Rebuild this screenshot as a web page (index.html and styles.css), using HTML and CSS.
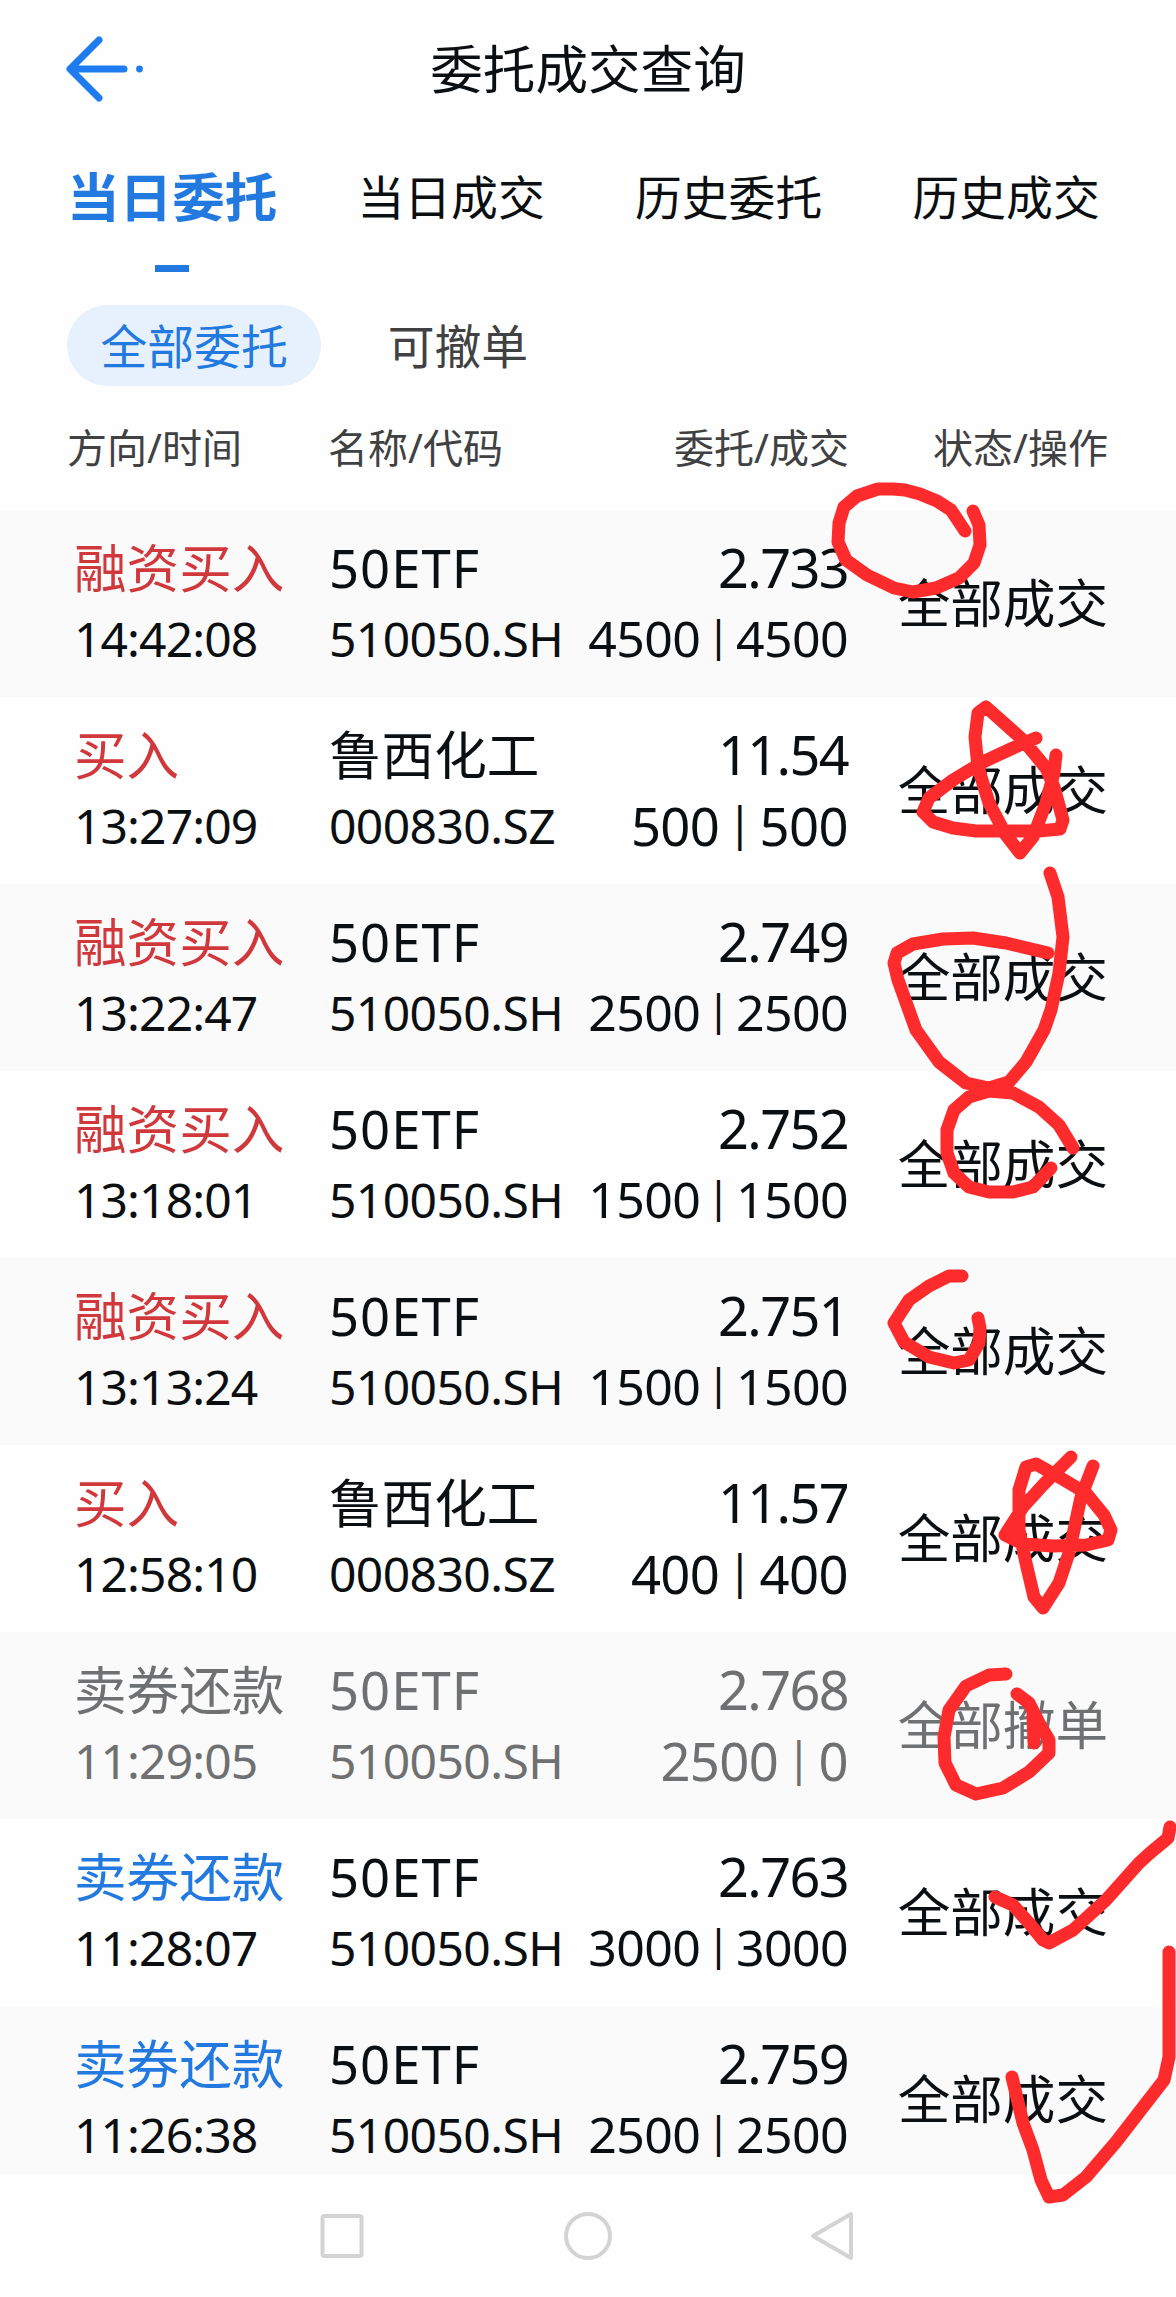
FILE: index.html
```html
<!DOCTYPE html>
<html lang="zh-CN">

<head>
    <meta charset="UTF-8">
    <meta name="viewport" content="width=device-width, initial-scale=1.0">
    <title>委托成交查询</title>

    <link rel="stylesheet" href="styles.css">
</head>

<body>
    <div class="page">
        <header class="topbar">
            <svg class="back" width="80" height="66" viewBox="0 0 80 66">
                <path d="M33 4 L4 33 L33 62 M5 33 H58" />
                <circle cx="73.500" cy="33" r="3.400" />
            </svg>
            <h1>委托成交查询</h1>
        </header>

        <nav class="tabs">
            <span class="tab active">当日委托</span>
            <span class="tab">当日成交</span>
            <span class="tab">历史委托</span>
            <span class="tab">历史成交</span>
        </nav>

        <div class="filters">
            <span class="filter on">全部委托</span>
            <span class="filter">可撤单</span>
        </div>

        <div class="thead">
            <span>方向/时间</span>
            <span>名称/代码</span>
            <span class="right">委托/成交</span>
            <span class="right">状态/操作</span>
        </div>

        <main class="list">
            <div class="row">
                <div class="side"><p class="big buy">融资买入</p><p class="time">14:42:08</p></div>
                <div class="stock"><p class="big etf">50ETF</p><p class="code">510050.SH</p></div>
                <div class="price"><p class="num">2.733</p><p class="qty long">4500 <i>|</i> 4500</p></div>
                <div class="status">全部成交</div>
            </div>
            <div class="row">
                <div class="side"><p class="big buy">买入</p><p class="time">13:27:09</p></div>
                <div class="stock"><p class="big">鲁西化工</p><p class="code">000830.SZ</p></div>
                <div class="price"><p class="num">11.54</p><p class="qty">500 <i>|</i> 500</p></div>
                <div class="status">全部成交</div>
            </div>
            <div class="row">
                <div class="side"><p class="big buy">融资买入</p><p class="time">13:22:47</p></div>
                <div class="stock"><p class="big etf">50ETF</p><p class="code">510050.SH</p></div>
                <div class="price"><p class="num">2.749</p><p class="qty long">2500 <i>|</i> 2500</p></div>
                <div class="status">全部成交</div>
            </div>
            <div class="row">
                <div class="side"><p class="big buy">融资买入</p><p class="time">13:18:01</p></div>
                <div class="stock"><p class="big etf">50ETF</p><p class="code">510050.SH</p></div>
                <div class="price"><p class="num">2.752</p><p class="qty long">1500 <i>|</i> 1500</p></div>
                <div class="status">全部成交</div>
            </div>
            <div class="row">
                <div class="side"><p class="big buy">融资买入</p><p class="time">13:13:24</p></div>
                <div class="stock"><p class="big etf">50ETF</p><p class="code">510050.SH</p></div>
                <div class="price"><p class="num">2.751</p><p class="qty long">1500 <i>|</i> 1500</p></div>
                <div class="status">全部成交</div>
            </div>
            <div class="row">
                <div class="side"><p class="big buy">买入</p><p class="time">12:58:10</p></div>
                <div class="stock"><p class="big">鲁西化工</p><p class="code">000830.SZ</p></div>
                <div class="price"><p class="num">11.57</p><p class="qty">400 <i>|</i> 400</p></div>
                <div class="status">全部成交</div>
            </div>
            <div class="row cancelled">
                <div class="side"><p class="big">卖券还款</p><p class="time">11:29:05</p></div>
                <div class="stock"><p class="big etf">50ETF</p><p class="code">510050.SH</p></div>
                <div class="price"><p class="num">2.768</p><p class="qty">2500 <i>|</i> 0</p></div>
                <div class="status">全部撤单</div>
            </div>
            <div class="row">
                <div class="side"><p class="big sell">卖券还款</p><p class="time">11:28:07</p></div>
                <div class="stock"><p class="big etf">50ETF</p><p class="code">510050.SH</p></div>
                <div class="price"><p class="num">2.763</p><p class="qty long">3000 <i>|</i> 3000</p></div>
                <div class="status">全部成交</div>
            </div>
            <div class="row last">
                <div class="side"><p class="big sell">卖券还款</p><p class="time">11:26:38</p></div>
                <div class="stock"><p class="big etf">50ETF</p><p class="code">510050.SH</p></div>
                <div class="price"><p class="num">2.759</p><p class="qty long">2500 <i>|</i> 2500</p></div>
                <div class="status">全部成交</div>
            </div>
        </main>

        <footer class="sysnav">
            <svg width="48" height="52" viewBox="0 0 48 52"><rect x="4.500" y="6" width="39" height="40" rx="2" /></svg>
            <svg width="52" height="52" viewBox="0 0 52 52"><circle cx="26" cy="26" r="22" /></svg>
            <svg width="48" height="52" viewBox="0 0 48 52"><path d="M42 4 V48 L4 26 Z" /></svg>
        </footer>

        <!-- pen marks -->
        <svg class="marks" width="1176" height="2297" viewBox="0 0 1176 2297">
            <polyline points="965,531 951,510 937,501 920,494 905,490 893,489 878,489 857,496 844,507 839,523 838,542 846,560 867,575 894,588 913,592 936,588 959,578 974,563 980,545 979,525 973,511" />
            <polyline points="1036,738 1013,748 983,762 953,780 929,798 923,812 933,822 953,828 976,831 1039,831 1060,829 1063,820 1054,787 1046,768 1023,740 986,707 978,713 975,737 978,767 989,803 1006,835 1020,853 1033,837 1046,803 1054,773 1056,755" />
            <polyline points="1050,873 1058,897 1063,937 1059,973 1051,1010 1044,1030 1026,1062 1009,1082 989,1088 966,1083 939,1062 916,1030 898,980 894,963 897,953 913,944 943,939 973,938 1006,943 1048,953" />
            <polyline points="1051,1168 1033,1187 1013,1192 989,1192 969,1187 954,1173 947,1153 947,1130 954,1110 969,1097 989,1091 1013,1093 1039,1107 1059,1125 1073,1148" />
            <polyline points="962,1276 949,1276 929,1286 909,1300 894,1323 904,1342 929,1357 954,1363 969,1360 979,1343 980,1328 978,1318" />
            <polyline points="1071,1457 1043,1485 1023,1507 1005,1535 1023,1544 1053,1546 1086,1545 1108,1540 1111,1530 1104,1515 1086,1493 1059,1477 1036,1464 1026,1467 1019,1490 1019,1530 1026,1563 1034,1597 1043,1608 1059,1583 1069,1553 1081,1497 1093,1466" />
            <polyline points="1006,1674 989,1675 966,1686 949,1710 944,1737 945,1763 956,1785 976,1794 1003,1788 1029,1772 1049,1753 1049,1740 1039,1723 1029,1703 1017,1694" />
            <polyline points="1033,1715 1034,1743" />
            <polyline points="995,1897 1013,1905 1029,1923 1043,1940 1049,1943 1073,1930 1106,1900 1139,1863 1150,1853 1168,1838 1170,1827" />
            <polyline points="1169,1952 1169,2057 1164,2080 1116,2142 1086,2177 1063,2195 1049,2197 1041,2180 1033,2150 1023,2123 1012,2077" />
        </svg>
    </div>
</body>

</html>
```
FILE: styles.css
```css
* {
    box-sizing: border-box;
}

body {
    margin: 0;
    background-color: #fefefe;
    color: #0b0f12;
    font-family: "Noto Sans", "Noto Sans CJK SC", sans-serif;
}

h1,
p {
    margin: 0;
    font-weight: 400;
}

.page {
    position: relative;
    width: 1176px;
    height: 2297px;
    overflow: hidden;
    display: flex;
    flex-direction: column;
}

.topbar {
    display: grid;
    grid-template-columns: 1fr auto 1fr;
    align-items: center;
    height: 138px;
    padding: 0 66px;
}

.topbar h1 {
    font-size: 52.6px;
    line-height: 80px;
}

.back path {
    fill: none;
    stroke: #1f7cf0;
    stroke-width: 7;
    stroke-linecap: round;
    stroke-linejoin: round;
}

.back circle {
    fill: #1f7cf0;
}

.tabs {
    display: flex;
    height: 167px;
    padding: 19px 0 0 67px;
}

.tab {
    flex: none;
    width: 277.5px;
    font-size: 46.8px;
    line-height: 80px;
}

.tab.active {
    width: 290.5px;
    color: #2279e0;
    font-size: 52.6px;
    font-weight: 700;
}

.tab.active::after {
    content: "";
    display: block;
    width: 34px;
    height: 7px;
    margin: 28px 0 0 88px;
    background-color: #2279e0;
}

.filters {
    display: flex;
    height: 81px;
    padding-left: 67px;
}

.filter {
    padding: 0 33.5px;
    border-radius: 41px;
    color: #404142;
    font-size: 46.8px;
    line-height: 82px;
}

.filter.on {
    margin-right: 33px;
    background-color: #e6f1fd;
    color: #2279e0;
}

.thead,
.row {
    display: grid;
    grid-template-columns: 255px 250px 269px 1fr;
    padding: 0 68px 0 74px;
}

.thead {
    grid-template-columns: 261px 262px 259px 1fr;
    height: 124px;
    padding-left: 67px;
    color: #404142;
    font-size: 40px;
    line-height: 123px;
}

.right {
    text-align: right;
}

.row {
    flex: none;
    height: 187px;
    padding-top: 22px;
}

.row:nth-child(odd) {
    background-color: #fafafa;
}

.row.last {
    height: 168px;
}

.row p {
    height: 71px;
    line-height: 71px;
    white-space: nowrap;
}

.big {
    font-size: 52.6px;
}

.etf {
    letter-spacing: 1px;
}

.time,
.code {
    font-size: 48px;
    letter-spacing: -0.6px;
}

.time {
    letter-spacing: -0.9px;
}

.price {
    text-align: right;
}

.num {
    font-size: 54px;
    letter-spacing: -1.6px;
}

.qty {
    font-size: 52.6px;
    letter-spacing: -0.6px;
    word-spacing: -5px;
}

.qty.long {
    font-size: 50px;
    word-spacing: -6px;
}

/* separator between ordered and filled */
.qty i {
    position: relative;
    top: -6px;
    font-size: 0.85em;
    font-style: normal;
    line-height: 1;
}

.status {
    font-size: 52.6px;
    line-height: 142px;
    text-align: right;
}

.buy {
    color: #d0383c;
}

.sell {
    color: #2279e0;
}

.cancelled {
    color: #6e7072;
}

.sysnav {
    display: flex;
    align-items: center;
    justify-content: space-between;
    height: 123px;
    padding: 1px 319px 0 318px;
}

.sysnav svg {
    fill: none;
    stroke: #d3d3d3;
    stroke-width: 4;
    stroke-linejoin: round;
}

.marks {
    position: absolute;
    top: 0;
    left: 0;
    fill: none;
    stroke: #fe2b2d;
    stroke-width: 13;
    stroke-linecap: round;
    stroke-linejoin: round;
}
```
